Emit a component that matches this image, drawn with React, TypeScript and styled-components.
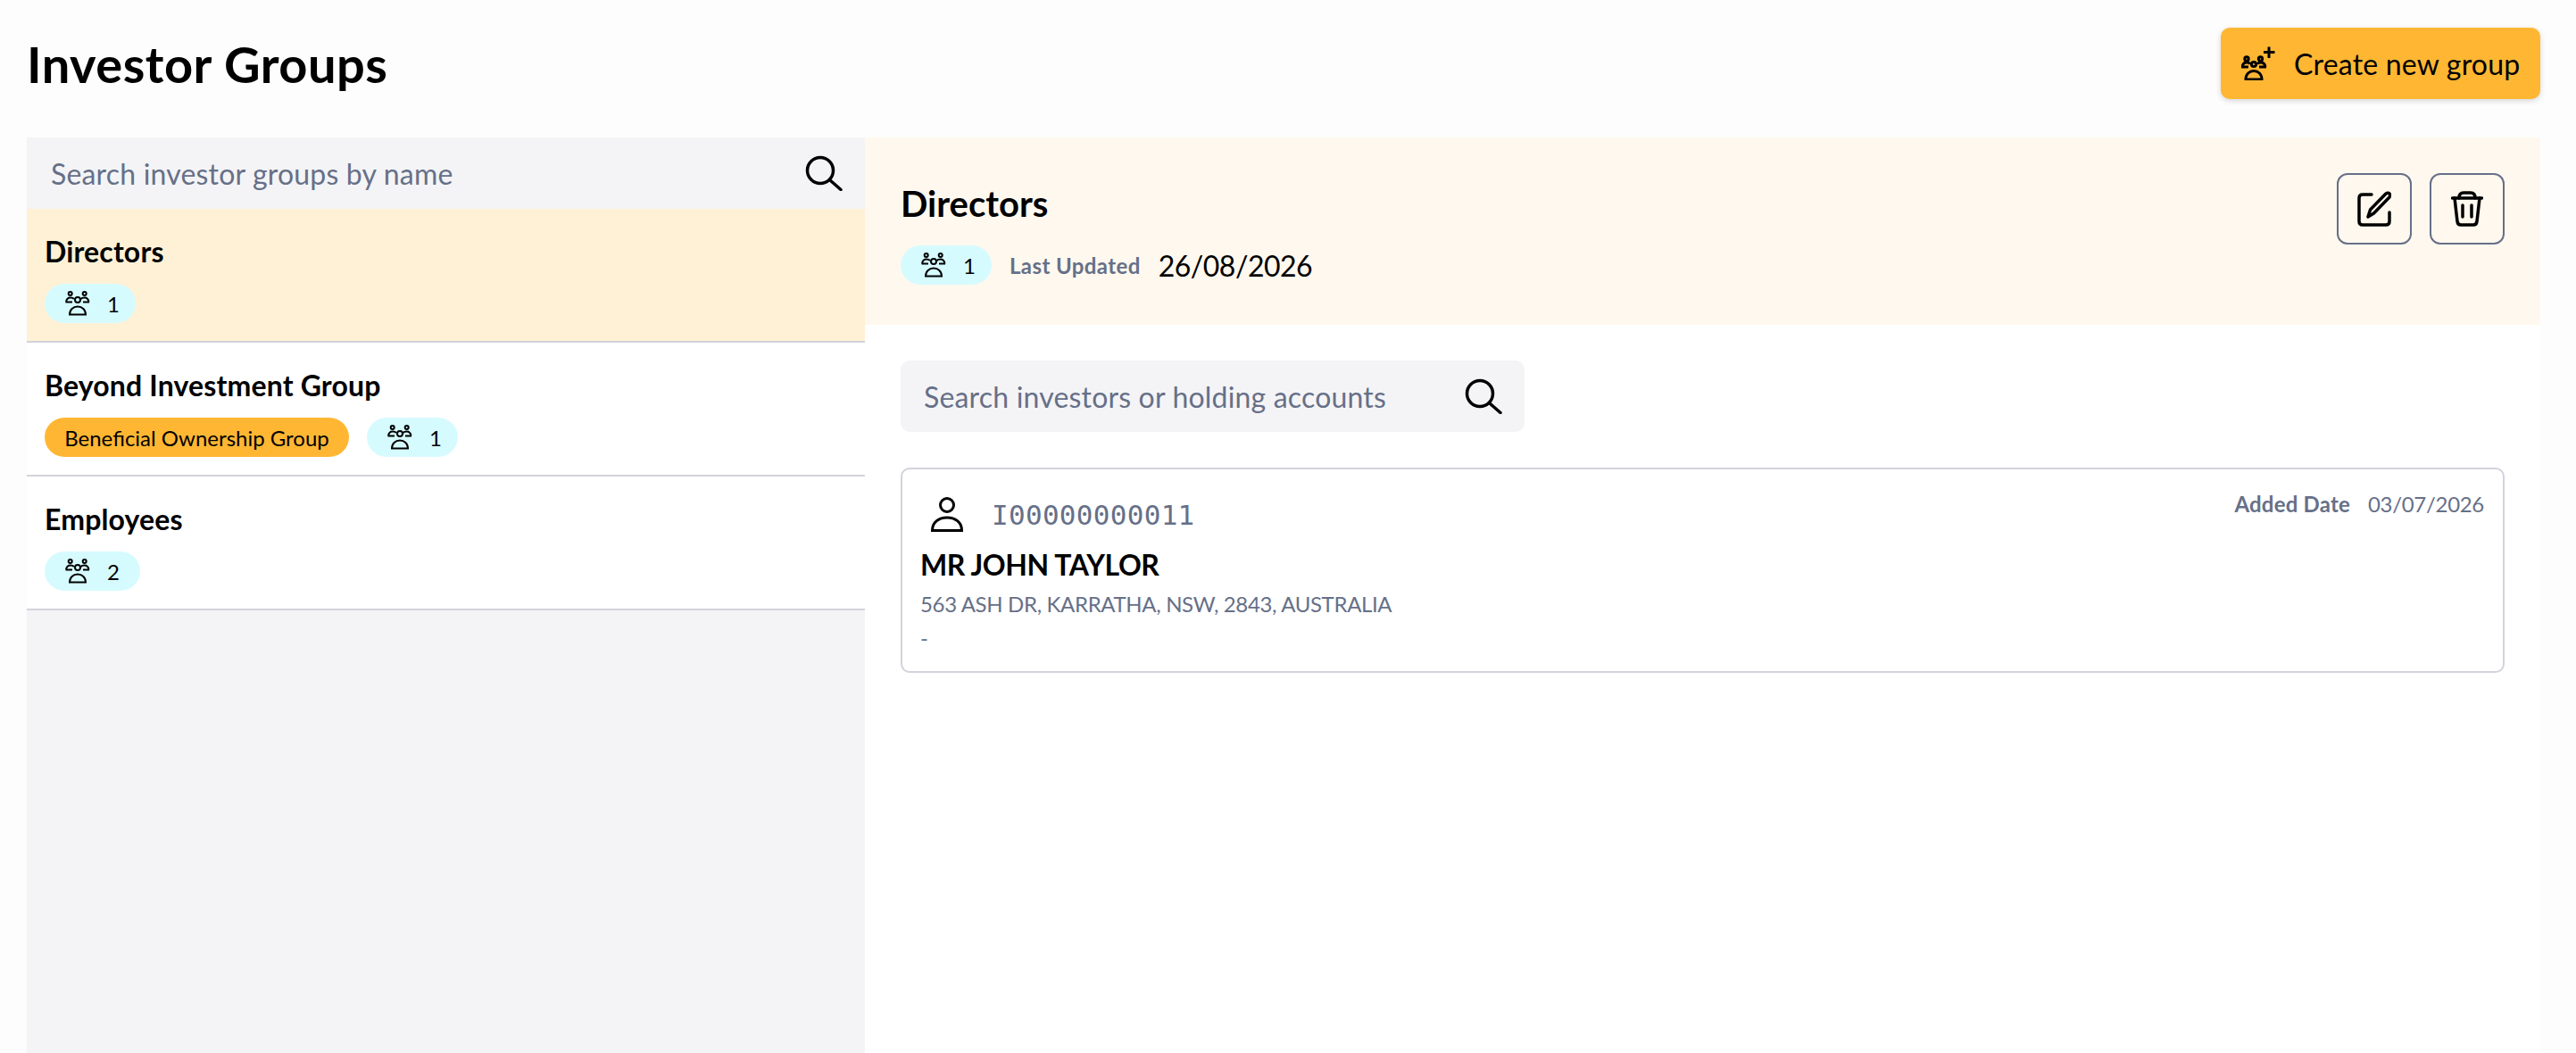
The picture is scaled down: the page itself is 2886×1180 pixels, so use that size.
import styled, { createGlobalStyle } from "styled-components";

const GlobalStyle = createGlobalStyle`
  * { box-sizing: border-box; }
  html, body { margin: 0; padding: 0; background: #fdfdfd; }
  body { font-family: Lato, "Noto Sans", sans-serif; color: #000; }
`;

const Page = styled.div`
  width: 2886px;
  height: 1180px;
  overflow: hidden;
  padding: 0 40px 0 30px;
  display: flex;
  flex-direction: column;
`;

const TopBar = styled.header`
  height: 154px;
  padding: 31px 0 43px;
  display: flex;
  align-items: center;
  justify-content: space-between;
`;

const Title = styled.h1`
  margin: 0;
  font-size: 56px;
  font-weight: 700;
  letter-spacing: 0.5px;
`;

const CreateButton = styled.button`
  width: 358px;
  height: 80px;
  padding: 0 0 0 23px;
  display: flex;
  align-items: center;
  gap: 21px;
  border: 0;
  border-radius: 10px;
  background: #ffb733;
  box-shadow: 0 2px 6px rgba(0, 0, 0, 0.16);
  font: inherit;
  font-size: 32px;
  letter-spacing: 0.2px;
  color: #000;
`;

const Main = styled.div`
  flex: 1;
  display: grid;
  grid-template-columns: 939px 1fr;
  min-height: 0;
`;

const Sidebar = styled.aside`
  background: #f4f4f6;
`;

const SidebarSearch = styled.div`
  height: 80px;
  padding: 0 25px 0 27px;
  display: flex;
  align-items: center;
  justify-content: space-between;
`;

const Placeholder = styled.span`
  font-size: 32px;
  letter-spacing: 0.18px;
  color: #667088;
`;

const GroupRow = styled.div<{ $active?: boolean }>`
  height: 150px;
  padding: 27px 20px 0;
  background: ${(p) => (p.$active ? "#fff1d6" : "#fff")};
  border-bottom: 2px solid #d2d3dc;
`;

const GroupName = styled.div`
  font-size: 32px;
  font-weight: 700;
  line-height: 42px;
  letter-spacing: 0.15px;
`;

const PillRow = styled.div`
  margin-top: 15px;
  display: flex;
  gap: 20px;
`;

const CountPill = styled.span<{ $wide?: boolean }>`
  width: ${(p) => (p.$wide ? "107px" : "102px")};
  height: 44px;
  padding-left: 23px;
  display: inline-flex;
  align-items: center;
  gap: 19px;
  border-radius: 22px;
  background: #d6fbff;
  font-size: 24px;
`;

const TypePill = styled.span`
  width: 341px;
  height: 44px;
  display: inline-flex;
  align-items: center;
  justify-content: center;
  border-radius: 22px;
  background: #ffb733;
  font-size: 24px;
`;

const Detail = styled.section`
  background: #fff;
`;

const DetailHeader = styled.div`
  height: 210px;
  padding: 40px 40px 0;
  display: flex;
  justify-content: space-between;
  background: #fff8ee;
`;

const DetailName = styled.h2`
  margin: 4px 0 0;
  font-size: 40px;
  font-weight: 700;
  line-height: 60px;
`;

const MetaRow = styled.div`
  margin-top: 17px;
  display: flex;
  align-items: center;
`;

const MetaLabel = styled.span`
  margin-left: 20px;
  font-size: 24px;
  font-weight: 700;
  letter-spacing: 0.4px;
  color: #667088;
`;

const MetaValue = styled.span`
  margin-left: 20px;
  font-size: 32px;
  letter-spacing: -0.5px;
`;

const Actions = styled.div`
  display: flex;
  gap: 20px;
`;

const ActionButton = styled.button`
  width: 84px;
  height: 80px;
  padding: 0;
  display: flex;
  align-items: center;
  justify-content: center;
  border: 2px solid #667088;
  border-radius: 12px;
  background: transparent;
`;

const DetailBody = styled.div`
  padding: 40px;
`;

const InvestorSearch = styled.div`
  width: 699px;
  height: 80px;
  padding: 0 25px 0 26px;
  display: flex;
  align-items: center;
  justify-content: space-between;
  border-radius: 10px;
  background: #f4f4f6;
`;

const InvestorCard = styled.article`
  margin-top: 40px;
  height: 230px;
  padding: 22px 20px 0;
  display: flex;
  justify-content: space-between;
  border: 2px solid #d2d3dc;
  border-radius: 10px;
`;

const InvestorInfo = styled.div`
  padding-top: 9px;
`;

const IdRow = styled.div`
  display: flex;
  align-items: center;
  gap: 32px;
  padding-left: 12px;
`;

const InvestorId = styled.span`
  font-family: "DejaVu Sans Mono", monospace;
  font-size: 31px;
  letter-spacing: 0.3px;
  color: #667088;
`;

const InvestorName = styled.div`
  margin-top: 16px;
  font-size: 32px;
  font-weight: 700;
  line-height: 42px;
  letter-spacing: -0.4px;
`;

const Address = styled.div`
  margin-top: 8px;
  font-size: 24px;
  line-height: 30px;
  letter-spacing: -0.35px;
  color: #667088;
`;

const AddedDate = styled.div`
  display: flex;
  gap: 20px;
  font-size: 24px;
  line-height: 34px;
  color: #667088;
  padding-right: 1px;
`;

const AddedLabel = styled.span`
  font-weight: 700;
  letter-spacing: 0.2px;
`;

const AddedValue = styled.span`
  letter-spacing: -0.3px;
`;

function GroupIcon() {
  return (
    <svg width="28" height="28" viewBox="0 0 28 28" fill="none" stroke="#000" strokeWidth="2">
      <circle cx="5.7" cy="3" r="2" />
      <circle cx="21.7" cy="3" r="2" />
      <circle cx="14" cy="10" r="3" />
      <path d="M0.5 12.5H8M1 12.5C1.5 9 3.5 7.5 6 7.5C7.5 7.5 9 8 10 9" />
      <path d="M27 12.5H20M26.5 12.5C26 9 24 7.5 21.5 7.5C20 7.5 18.5 8 17.5 9" />
      <path d="M5 26.5C5 21 9 17.5 14 17.5C19 17.5 23 21 23 26.5Z" />
    </svg>
  );
}

function CreateGroupIcon() {
  return (
    <svg width="38" height="38" viewBox="0 0 38 38" fill="none" stroke="#000" strokeWidth="3">
      <circle cx="6" cy="14" r="2.2" />
      <circle cx="21.5" cy="14" r="2.2" />
      <circle cx="14" cy="20" r="2.6" />
      <path d="M0 23H8M1 23C1.5 20 3.5 18 6 18C7.5 18 9 18.6 10 19.5" />
      <path d="M28 23H20M27 23C26.5 20 24.5 18 22 18C20.5 18 19 18.6 18 19.5" />
      <path d="M5 37C5 31 9 27.5 14 27.5C19 27.5 23 31 23 37Z" />
      <path d="M31 0.5V13M25 6.5H37.5" />
    </svg>
  );
}

function SearchIcon() {
  return (
    <svg width="42" height="40" viewBox="0 0 42 40" fill="none" stroke="#000" strokeWidth="3.5" strokeLinecap="round">
      <circle cx="17" cy="17" r="14.5" />
      <path d="M28 28L40 38.5" />
    </svg>
  );
}

function EditIcon() {
  return (
    <svg width="38" height="40" viewBox="0 0 38 40" fill="none" stroke="#000" strokeWidth="3.5" strokeLinecap="round" strokeLinejoin="round">
      <path d="M16 4H6C3.5 4 2 5.5 2 8V34C2 36.5 3.5 38 6 38H32C34.5 38 36 36.5 36 34V24" />
      <path d="M12 29L14.5 21L31.5 3.5C33 2 35 2 36 3C37 4.5 37 6 35.5 7.5L18.5 25Z" />
    </svg>
  );
}

function TrashIcon() {
  return (
    <svg width="36" height="40" viewBox="0 0 36 40" fill="none" stroke="#000" strokeWidth="3.5" strokeLinecap="round" strokeLinejoin="round">
      <path d="M1.5 8H34.5" />
      <path d="M9 8C9 4 11 2 14 2H22C25 2 27 4 27 8" />
      <path d="M4 8L7 34C7.3 37 9 38 11 38H25C27 38 28.7 37 29 34L32 8" />
      <path d="M13 16V29M23 16V29" />
    </svg>
  );
}

function PersonIcon() {
  return (
    <svg width="36" height="39" viewBox="0 0 36 39" fill="none" stroke="#000" strokeWidth="3">
      <circle cx="18" cy="9" r="7.5" />
      <path d="M1.5 37.5C1.5 28 9 23 18 23C27 23 34.5 28 34.5 37.5Z" />
    </svg>
  );
}

const groups = [
  { name: "Directors", count: 1, active: true },
  { name: "Beyond Investment Group", count: 1, type: "Beneficial Ownership Group" },
  { name: "Employees", count: 2 },
];

export default function App() {
  return (
    <Page>
      <GlobalStyle />
      <TopBar>
        <Title>Investor Groups</Title>
        <CreateButton>
          <CreateGroupIcon />
          Create new group
        </CreateButton>
      </TopBar>
      <Main>
        <Sidebar>
          <SidebarSearch>
            <Placeholder>Search investor groups by name</Placeholder>
            <SearchIcon />
          </SidebarSearch>
          {groups.map((g) => (
            <GroupRow key={g.name} $active={g.active}>
              <GroupName>{g.name}</GroupName>
              <PillRow>
                {g.type ? <TypePill>{g.type}</TypePill> : null}
                <CountPill $wide={g.count > 1}>
                  <GroupIcon />
                  {g.count}
                </CountPill>
              </PillRow>
            </GroupRow>
          ))}
        </Sidebar>
        <Detail>
          <DetailHeader>
            <div>
              <DetailName>Directors</DetailName>
              <MetaRow>
                <CountPill>
                  <GroupIcon />1
                </CountPill>
                <MetaLabel>Last Updated</MetaLabel>
                <MetaValue>26/08/2026</MetaValue>
              </MetaRow>
            </div>
            <Actions>
              <ActionButton>
                <EditIcon />
              </ActionButton>
              <ActionButton>
                <TrashIcon />
              </ActionButton>
            </Actions>
          </DetailHeader>
          <DetailBody>
            <InvestorSearch>
              <Placeholder>Search investors or holding accounts</Placeholder>
              <SearchIcon />
            </InvestorSearch>
            <InvestorCard>
              <InvestorInfo>
                <IdRow>
                  <PersonIcon />
                  <InvestorId>I00000000011</InvestorId>
                </IdRow>
                <InvestorName>MR JOHN TAYLOR</InvestorName>
                <Address>563 ASH DR, KARRATHA, NSW, 2843, AUSTRALIA</Address>
                <Address>-</Address>
              </InvestorInfo>
              <AddedDate>
                <AddedLabel>Added Date</AddedLabel>
                <AddedValue>03/07/2026</AddedValue>
              </AddedDate>
            </InvestorCard>
          </DetailBody>
        </Detail>
      </Main>
    </Page>
  );
}
